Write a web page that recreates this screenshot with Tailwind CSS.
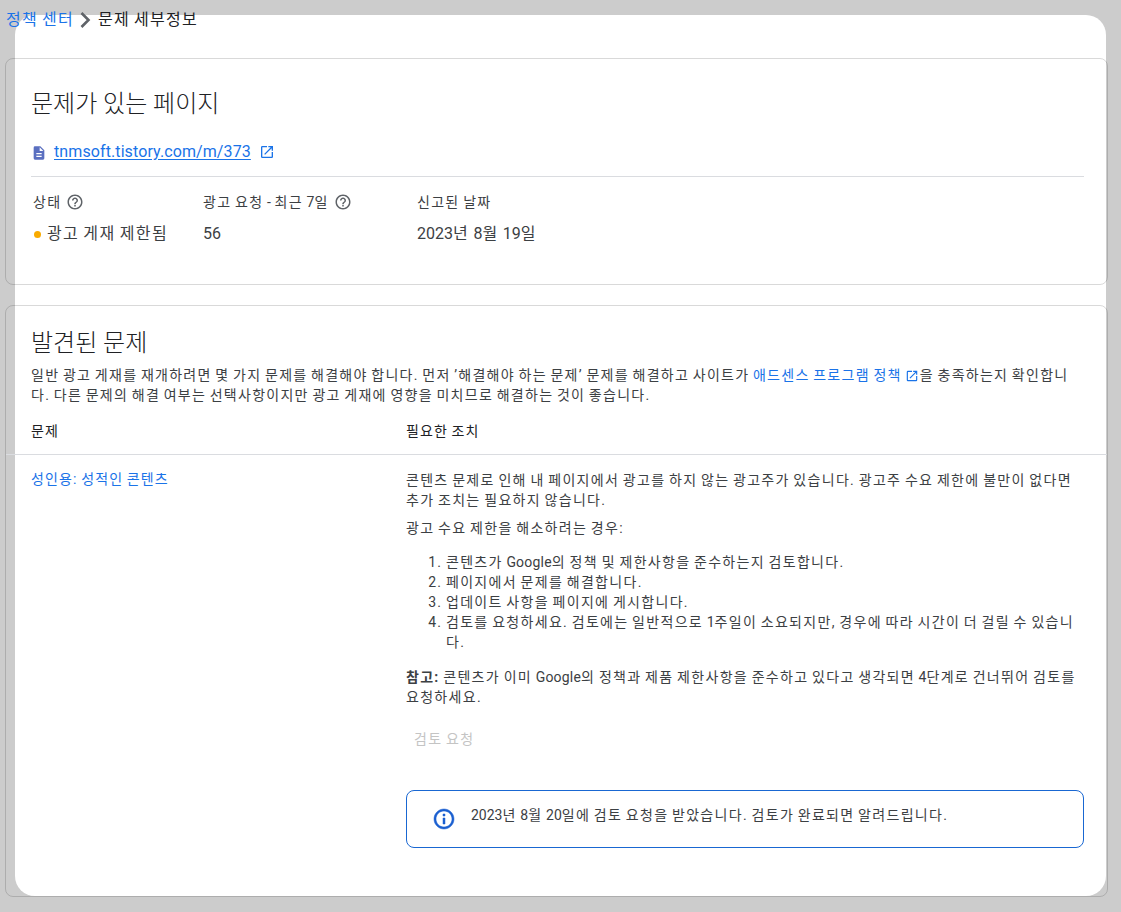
<!DOCTYPE html>
<html lang="ko">
<head>
  <meta charset="UTF-8" />
  <title>문제 세부정보</title>
  <script src="https://cdn.jsdelivr.net/npm/@tailwindcss/browser@4"></script>
</head>
<body class="bg-[#cccccc] text-[#3c4043] font-['Roboto','Noto_Sans_CJK_KR',sans-serif]">
  <div class="relative w-[1121px] h-[912px] overflow-hidden">
    <!-- white sheet behind the content -->
    <div class="absolute left-[15px] top-[15px] w-[1091px] h-[881px] bg-white rounded-[20px]"></div>

    <div class="relative pl-[5px] w-[1108px]">
      <!-- Breadcrumb -->
      <div class="h-[58px] pt-[8px] flex items-start text-[16px] leading-[24px] text-[#202124] tracking-[1.28px] [word-spacing:-1.28px]">
        <a class="text-[#1a73e8] ml-px">정책 센터</a>
        <svg class="w-[24px] h-[24px]" viewBox="0 0 24 24"><path fill="none" stroke="#5f6368" stroke-width="2.600" d="M7.500 5l7 7-7 7"/></svg>
        <span>문제 세부정보</span>
      </div>

      <!-- Page card -->
      <section class="h-[227px] border border-black/15 rounded-[8px] pl-[25px] pr-[23px]">
        <h2 class="pt-[29px] text-[24px] leading-[32px] text-[#202124] font-light">문제가 있는 페이지</h2>
        <div class="mt-[20px] flex items-center h-[24px] text-[16px] tracking-[.1px] text-[#1a73e8]">
          <svg class="w-[16px] h-[16px] mr-[7px] mt-[2px]" viewBox="0 0 24 24" fill="#5a6fc0"><path d="M14 2H6a2 2 0 0 0-2 2v16a2 2 0 0 0 2 2h12a2 2 0 0 0 2-2V8l-6-6zm2 16H8v-2h8v2zm0-4H8v-2h8v2zm-3-5V3.500L18.500 9H13z"/></svg>
          <a class="underline underline-offset-2">tnmsoft.tistory.com/m/373</a>
          <svg class="w-[16px] h-[16px] ml-[8px]" viewBox="0 0 24 24" fill="#1a73e8"><path d="M19 19H5V5h7V3H5a2 2 0 0 0-2 2v14a2 2 0 0 0 2 2h14a2 2 0 0 0 2-2v-7h-2v7zM14 3v2h3.590l-9.830 9.830 1.410 1.410L19 6.410V10h2V3h-7z"/></svg>
        </div>
        <div class="mt-[12px] border-t border-[#dadce0] pt-[15px] grid grid-cols-[172px_214px_1fr] text-[14px] leading-[20px] tracking-[1.3px] [word-spacing:-1.12px]">
          <div class="pl-[2px] flex items-center gap-[5px]">상태
            <svg class="w-[18px] h-[18px]" viewBox="0 0 24 24" fill="#5f6368"><path d="M11 18h2v-2h-2v2zm1-16C6.480 2 2 6.480 2 12s4.480 10 10 10 10-4.480 10-10S17.520 2 12 2zm0 18c-4.410 0-8-3.590-8-8s3.590-8 8-8 8 3.590 8 8-3.590 8-8 8zm0-14c-2.210 0-4 1.790-4 4h2c0-1.100.9-2 2-2s2 .9 2 2c0 2-3 1.750-3 5h2c0-2.250 3-2.500 3-5 0-2.210-1.790-4-4-4z"/></svg>
          </div>
          <div class="flex items-center gap-[5px]"><span>광고 요청 <span class="tracking-normal">-</span> 최근 <span class="tracking-normal">7</span>일</span>
            <svg class="w-[18px] h-[18px]" viewBox="0 0 24 24" fill="#5f6368"><path d="M11 18h2v-2h-2v2zm1-16C6.480 2 2 6.480 2 12s4.480 10 10 10 10-4.480 10-10S17.520 2 12 2zm0 18c-4.410 0-8-3.590-8-8s3.590-8 8-8 8 3.590 8 8-3.590 8-8 8zm0-14c-2.210 0-4 1.790-4 4h2c0-1.100.9-2 2-2s2 .9 2 2c0 2-3 1.750-3 5h2c0-2.250 3-2.500 3-5 0-2.210-1.790-4-4-4z"/></svg>
          </div>
          <div>신고된 날짜</div>
          <div class="mt-[10px] pl-[3px] flex items-center gap-[6px] text-[16px] leading-[24px] tracking-[1.4px] [word-spacing:-1.28px]"><span class="w-[7px] h-[7px] rounded-full bg-[#f9ab00]"></span>광고 게재 제한됨</div>
          <div class="mt-[10px] text-[16px] leading-[24px] tracking-normal">56</div>
          <div class="mt-[10px] text-[16px] leading-[24px] tracking-[1.5px] [word-spacing:-1.28px]"><span class="tracking-normal">2023</span>년 <span class="tracking-normal">8</span>월 <span class="tracking-normal">19</span>일</div>
        </div>
      </section>

      <!-- Issues card -->
      <section class="mt-[20px] h-[592px] border border-black/15 rounded-[8px]">
        <div class="px-[25px] tracking-[1.27px] [word-spacing:-1.12px]">
          <h2 class="pt-[21px] text-[24px] leading-[32px] text-[#202124] font-light tracking-normal [word-spacing:0]">발견된 문제</h2>
          <p class="mt-[6px] text-[14px] leading-[20px] whitespace-nowrap">일반 광고 게재를 재개하려면 몇 가지 문제를 해결해야 합니다. 먼저 ’해결해야 하는 문제’ 문제를 해결하고 사이트가 <a class="text-[#1a73e8]">애드센스 프로그램 정책</a><svg class="inline w-[14px] h-[14px] ml-[3px] mr-[1px] align-[-3px]" viewBox="0 0 24 24" fill="#1a73e8"><path d="M19 19H5V5h7V3H5a2 2 0 0 0-2 2v14a2 2 0 0 0 2 2h14a2 2 0 0 0 2-2v-7h-2v7zM14 3v2h3.590l-9.830 9.830 1.410 1.410L19 6.410V10h2V3h-7z"/></svg>을 충족하는지 확인합니<br>다. 다른 문제의 해결 여부는 선택사항이지만 광고 게재에 영향을 미치므로 해결하는 것이 좋습니다.</p>
        </div>
        <div class="mt-[16px] h-[34px] grid grid-cols-[375px_1fr] px-[25px] text-[14px] leading-[20px] tracking-[1.12px] [word-spacing:-1.12px] text-[#202124] border-b border-[#dadce0]">
          <div>문제</div>
          <div>필요한 조치</div>
        </div>
        <div class="grid grid-cols-[375px_1fr] px-[25px] pt-[15px] text-[14px] leading-[20px] tracking-[1.3px] [word-spacing:-1.12px]">
          <a class="text-[#1a73e8] -mt-px tracking-[1.15px]">성인용: 성적인 콘텐츠</a>
          <div class="w-[678px]">
            <p class="whitespace-nowrap">콘텐츠 문제로 인해 내 페이지에서 광고를 하지 않는 광고주가 있습니다. 광고주 수요 제한에 불만이 없다면<br>추가 조치는 필요하지 않습니다.</p>
            <p class="mt-[8px]">광고 수요 제한을 해소하려는 경우:</p>
            <ol class="mt-[14px] pl-[40px] list-decimal whitespace-nowrap">
              <li>콘텐츠가 <span class="tracking-[.2px]">Google</span>의 정책 및 제한사항을 준수하는지 검토합니다.</li>
              <li>페이지에서 문제를 해결합니다.</li>
              <li>업데이트 사항을 페이지에 게시합니다.</li>
              <li>검토를 요청하세요. 검토에는 일반적으로 <span class="tracking-normal">1</span>주일이 소요되지만, 경우에 따라 시간이 더 걸릴 수 있습니<br>다.</li>
            </ol>
            <p class="mt-[15px] whitespace-nowrap"><b class="font-bold">참고:</b> 콘텐츠가 이미 <span class="tracking-[.2px]">Google</span>의 정책과 제품 제한사항을 준수하고 있다고 생각되면 <span class="tracking-normal">4</span>단계로 건너뛰어 검토를<br>요청하세요.</p>
            <div class="mt-[14px] h-[36px] flex items-center pl-[8px] text-[14px] text-[#c4c4c4]">검토 요청</div>
            <div class="mt-[33px] h-[58px] border border-[#1967d2] rounded-[8px] flex items-start pt-[14px] pl-[26px] gap-[16px]">
              <svg class="w-[24px] h-[24px] mt-[2px] -ml-[1px] -mr-[1px]" viewBox="0 0 24 24" fill="#1a5fd0" stroke="#1a5fd0" stroke-width=".5"><path d="M11 7h2v2h-2V7zm0 4h2v6h-2v-6zm1-9C6.480 2 2 6.480 2 12s4.480 10 10 10 10-4.480 10-10S17.520 2 12 2zm0 18c-4.410 0-8-3.590-8-8s3.590-8 8-8 8 3.590 8 8-3.590 8-8 8z"/></svg>
              <span class="text-[14px] leading-[20px] whitespace-nowrap"><span class="tracking-normal">2023</span>년 <span class="tracking-normal">8</span>월 <span class="tracking-normal">20</span>일에 검토 요청을 받았습니다. 검토가 완료되면 알려드립니다.</span>
            </div>
          </div>
        </div>
      </section>
    </div>
  </div>
</body>
</html>
